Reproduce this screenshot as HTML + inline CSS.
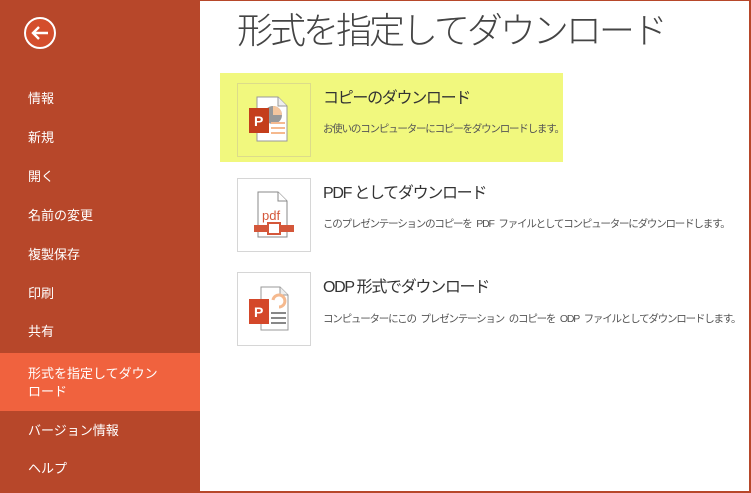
<!DOCTYPE html>
<html><head><meta charset="utf-8"><style>
*{margin:0;padding:0;box-sizing:border-box}
body{width:751px;height:493px;overflow:hidden;background:#B7472A;font-family:"Liberation Sans","Noto Sans CJK JP",sans-serif;position:relative}
.side{position:absolute;left:0;top:0;width:200px;height:493px;background:#B7472A}
.main{position:absolute;left:200px;top:1px;width:549px;height:490px;background:#fff}
.it{position:absolute;left:28px;color:#fff;font-size:13px;line-height:16px}
.sel{position:absolute;left:0;top:353px;width:200px;height:58px;background:#F0623E}
.title{position:absolute;left:37px;top:5px;font-size:36px;color:#444;line-height:50px;letter-spacing:-3px;white-space:nowrap;font-weight:300}
.hl{position:absolute;left:20px;top:72px;width:343px;height:89px;background:#F1F87E}
.box{position:absolute;left:37px;width:74px;height:74px;border:1px solid #d6d6d6;background:#fff}
.box svg{position:absolute;left:-1px;top:-1px}
.h{position:absolute;left:123px;font-size:16px;letter-spacing:-1.3px;color:#333;white-space:nowrap}
.d{position:absolute;left:123px;font-size:10.5px;letter-spacing:-1.2px;word-spacing:3px;color:#555;white-space:nowrap}
</style></head><body>
<div class="side">
<svg style="position:absolute;left:23px;top:16px" width="34" height="34" viewBox="0 0 34 34"><circle cx="17" cy="17" r="15" fill="#D44E2C" stroke="#fff" stroke-width="2"/><path d="M25 17H10M16 11l-6 6 6 6" stroke="#fff" stroke-width="2.4" fill="none"/></svg>
<div class="it" style="top:91px">情報</div>
<div class="it" style="top:130px">新規</div>
<div class="it" style="top:169px">開く</div>
<div class="it" style="top:208px">名前の変更</div>
<div class="it" style="top:247px">複製保存</div>
<div class="it" style="top:286px">印刷</div>
<div class="it" style="top:324px">共有</div>
<div class="sel"></div>
<div class="it" style="top:365px;line-height:18px">形式を指定してダウン<br>ロード</div>
<div class="it" style="top:423px">バージョン情報</div>
<div class="it" style="top:461px">ヘルプ</div>
</div>
<div class="main">
<div class="title">形式を指定してダウンロード</div>
<div class="hl"></div>
<div class="box" style="top:82px;background:transparent;border-color:#dcdc8a"><svg width="74" height="74"><path d="M20 14h21l9 9v35H20z" fill="#fff" stroke="#999"/><path d="M41 14v9h9" fill="#eee" stroke="#999"/><circle cx="36" cy="32" r="9" fill="#999"/><path d="M36 23v9h9a9 9 0 0 0-9-9z" fill="#F5C69E"/><rect x="12" y="25" width="20" height="25" fill="#C43E1C"/><text x="17" y="43" fill="#fff" font-size="14" font-weight="bold" font-family="Liberation Sans">P</text><path d="M34 40h14M34 45h14M34 50h14" stroke="#F5B98E" stroke-width="2"/></svg></div>
<div class="h" style="top:83px">コピーのダウンロード</div>
<div class="d" style="top:120px">お使いのコンピューターにコピーをダウンロードします。</div>
<div class="box" style="top:177px"><svg width="74" height="74"><path d="M21 14h20l9 9v36H21z" fill="#fff" stroke="#888"/><path d="M41 14v9h9" fill="#fff" stroke="#888"/><text x="25" y="42" fill="#D4573A" font-size="13" font-family="Liberation Sans">pdf</text><rect x="17" y="47" width="40" height="7" fill="#D4573A"/><rect x="31" y="45" width="12" height="11" fill="#fff" stroke="#D4573A" stroke-width="2"/></svg></div>
<div class="h" style="top:178px">PDF としてダウンロード</div>
<div class="d" style="top:215px">このプレゼンテーションのコピーを PDF ファイルとしてコンピューターにダウンロードします。</div>
<div class="box" style="top:271px"><svg width="74" height="74"><path d="M24 15h19l8 8v35H24z" fill="#fff" stroke="#999"/><path d="M43 15v8h8" fill="#eee" stroke="#999"/><path d="M36 28a6 6 0 1 1 6 7" stroke="#F5B98E" stroke-width="3" fill="none"/><rect x="12" y="27" width="20" height="25" fill="#D4482A"/><text x="17" y="45" fill="#fff" font-size="14" font-weight="bold" font-family="Liberation Sans">P</text><path d="M34 41h15M34 46h15M34 51h15" stroke="#888" stroke-width="2"/></svg></div>
<div class="h" style="top:272px">ODP 形式でダウンロード</div>
<div class="d" style="top:310px">コンピューターにこの プレゼンテーション のコピーを ODP ファイルとしてダウンロードします。</div>
</div>
</body></html>
